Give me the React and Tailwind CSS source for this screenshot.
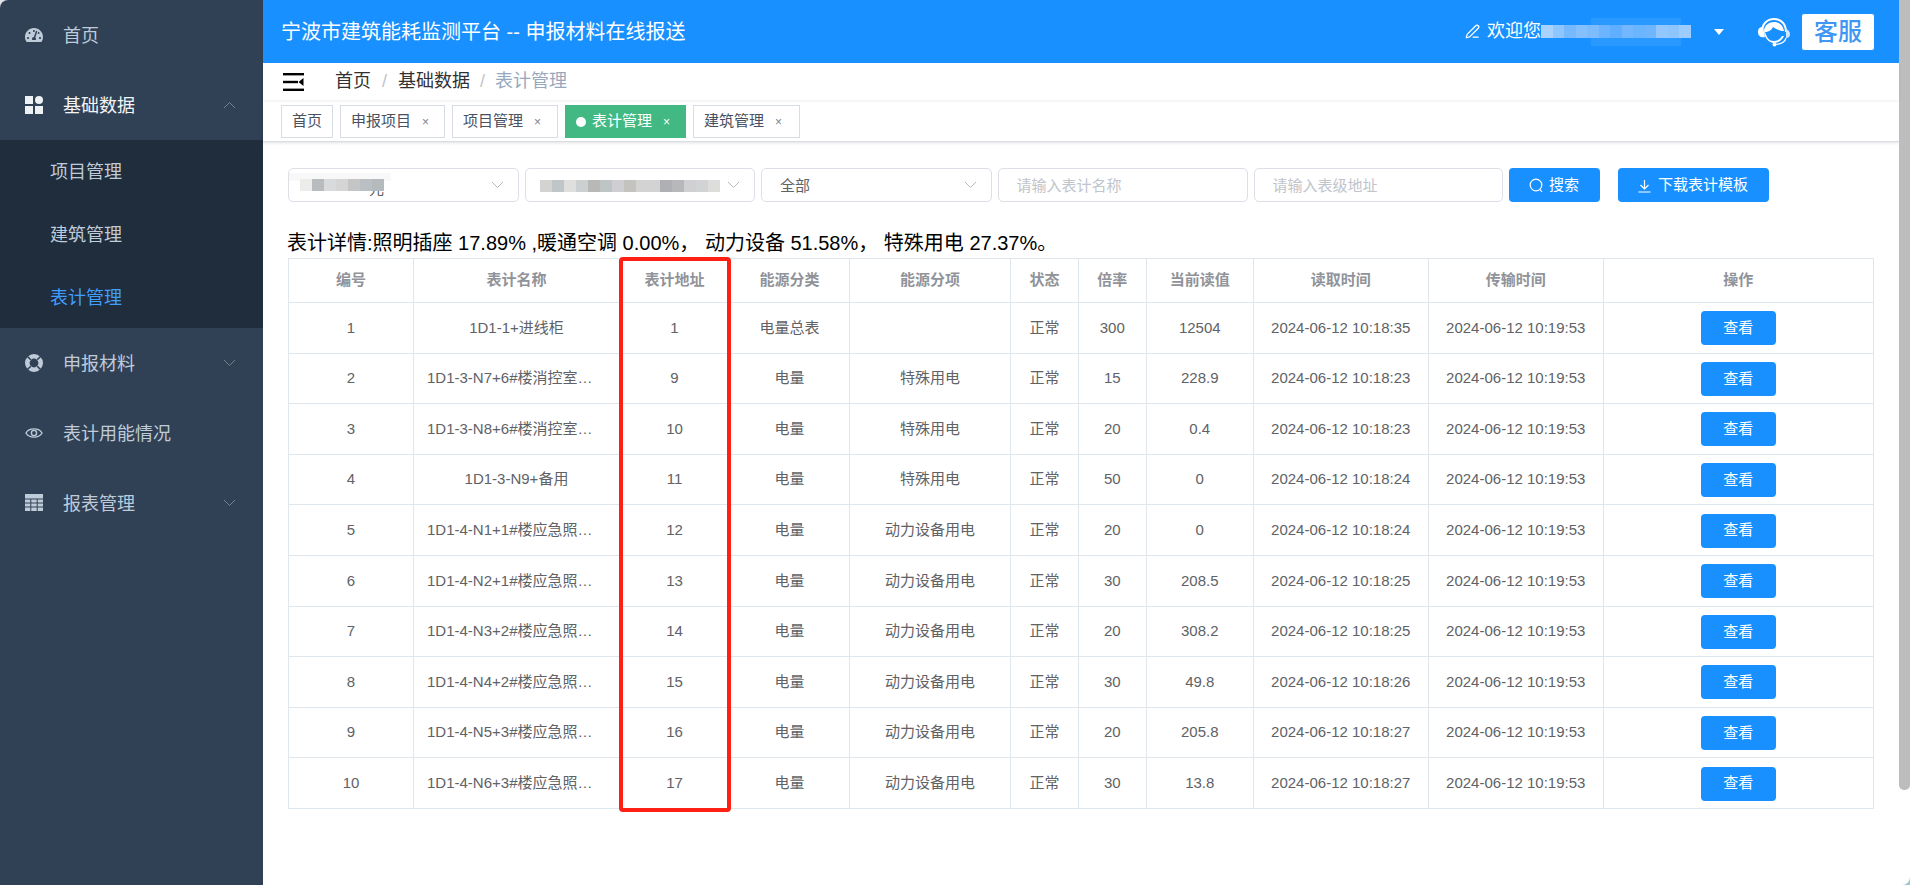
import React from 'react';
import { FaTachometerAlt } from 'react-icons/fa';
import { PenLine } from 'lucide-react';

const font = 'font-["Liberation_Sans","Noto_Sans_CJK_SC",sans-serif]';
const sent = '2024-06-12 10:19:53';

const rows = [
  ['1', '1D1-1+进线柜', '1', '电量总表', '', '正常', '300', '12504', '2024-06-12 10:18:35', sent],
  ['2', '1D1-3-N7+6#楼消控室…', '9', '电量', '特殊用电', '正常', '15', '228.9', '2024-06-12 10:18:23', sent],
  ['3', '1D1-3-N8+6#楼消控室…', '10', '电量', '特殊用电', '正常', '20', '0.4', '2024-06-12 10:18:23', sent],
  ['4', '1D1-3-N9+备用', '11', '电量', '特殊用电', '正常', '50', '0', '2024-06-12 10:18:24', sent],
  ['5', '1D1-4-N1+1#楼应急照…', '12', '电量', '动力设备用电', '正常', '20', '0', '2024-06-12 10:18:24', sent],
  ['6', '1D1-4-N2+1#楼应急照…', '13', '电量', '动力设备用电', '正常', '30', '208.5', '2024-06-12 10:18:25', sent],
  ['7', '1D1-4-N3+2#楼应急照…', '14', '电量', '动力设备用电', '正常', '20', '308.2', '2024-06-12 10:18:25', sent],
  ['8', '1D1-4-N4+2#楼应急照…', '15', '电量', '动力设备用电', '正常', '30', '49.8', '2024-06-12 10:18:26', sent],
  ['9', '1D1-4-N5+3#楼应急照…', '16', '电量', '动力设备用电', '正常', '20', '205.8', '2024-06-12 10:18:27', sent],
  ['10', '1D1-4-N6+3#楼应急照…', '17', '电量', '动力设备用电', '正常', '30', '13.8', '2024-06-12 10:18:27', sent],
];

const heads = ['编号', '表计名称', '表计地址', '能源分类', '能源分项', '状态', '倍率', '当前读值', '读取时间', '传输时间', '操作'];
const colWidths = ['w-[125px]', 'w-[206px]', 'w-[110px]', 'w-[120px]', 'w-[161px]', 'w-[68px]', 'w-[67.5px]', 'w-[107.5px]', 'w-[174.5px]', 'w-[175.5px]', 'w-[269.5px]'];

const tags = [
  { label: '首页', w: 'w-[52px]' },
  { label: '申报项目', w: 'w-[105px]', close: true },
  { label: '项目管理', w: 'w-[106px]', close: true },
  { label: '表计管理', w: 'w-[121px]', close: true, active: true },
  { label: '建筑管理', w: 'w-[107px]', close: true },
];

const mosaic1 = ['bg-[#ececea]', 'bg-[#b9bcbf]', 'bg-[#d8dadb]', 'bg-[#d4d5d4]', 'bg-[#c4c6c6]', 'bg-[#b9bfc3]', 'bg-[#b5babd]'];
const mosaic2 = ['bg-[#d3d3d1]', 'bg-[#c0c5c8]', 'bg-[#dfdfde]', 'bg-[#ccd0d1]', 'bg-[#b8b9b6]', 'bg-[#bfc4c5]', 'bg-[#cfcfd3]', 'bg-[#c4c3bf]', 'bg-[#d3d3d3]', 'bg-[#d3d3d3]', 'bg-[#aeb0b4]', 'bg-[#b6b8ba]', 'bg-[#d0d0d2]', 'bg-[#d2d3d5]', 'bg-[#dddddb]'];
const mosaicTop = ['bg-[#a8d2ff]', 'bg-[#8fc6ff]', 'bg-[#77b9ff]', 'bg-[#84c0ff]', 'bg-[#7dbdff]', 'bg-[#6cb4ff]', 'bg-[#60aeff]', 'bg-[#72b7ff]', 'bg-[#6bb4ff]', 'bg-[#70b6ff]', 'bg-[#93c7ff]', 'bg-[#8ec5ff]', 'bg-[#9dccff]'];

const Chevron = ({ up, className = '' }) => (
  <svg width="13" height="8" viewBox="0 0 13 8" fill="none" className={className}>
    <path d={up ? 'M1 7 L6.5 1.5 L12 7' : 'M1 1 L6.5 6.5 L12 1'} stroke="currentColor" strokeWidth="1" />
  </svg>
);

const AppsIcon = () => (
  <svg width="18" height="18" viewBox="0 0 18 18" fill="currentColor">
    <rect x="0" y="0" width="8" height="8" />
    <circle cx="14" cy="4" r="4" />
    <rect x="0" y="10" width="8" height="8" />
    <rect x="10" y="10" width="8" height="8" />
  </svg>
);

const RingIcon = () => (
  <svg width="18" height="18" viewBox="0 0 18 18" fill="none">
    <circle cx="9" cy="9" r="6.7" stroke="currentColor" strokeWidth="4.6" />
    <path d="M2.2 2.2 L5.8 5.8 M15.8 2.2 L12.2 5.8 M2.2 15.8 L5.8 12.2 M15.8 15.8 L12.2 12.2" stroke="#304156" strokeWidth="1.6" />
  </svg>
);

const EyeIcon = () => (
  <svg width="18" height="14" viewBox="0 0 18 14" fill="none" stroke="currentColor" strokeWidth="1.4">
    <path d="M1 7 C4 1.5 14 1.5 17 7 C14 12.5 4 12.5 1 7 Z" />
    <circle cx="9" cy="7" r="2.6" />
  </svg>
);

const TableIcon = () => (
  <svg width="18" height="17" viewBox="0 0 18 17" fill="currentColor">
    <rect x="0" y="0" width="18" height="4.5" />
    <rect x="0" y="5.5" width="5.3" height="3" />
    <rect x="6.3" y="5.5" width="5.4" height="3" />
    <rect x="12.7" y="5.5" width="5.3" height="3" />
    <rect x="0" y="9.5" width="5.3" height="3" />
    <rect x="6.3" y="9.5" width="5.4" height="3" />
    <rect x="12.7" y="9.5" width="5.3" height="3" />
    <rect x="0" y="13.5" width="5.3" height="3.5" />
    <rect x="6.3" y="13.5" width="5.4" height="3.5" />
    <rect x="12.7" y="13.5" width="5.3" height="3.5" />
  </svg>
);

const MenuItem = ({ icon, label, arrow, open }) => (
  <div className={`h-[70px] flex items-center pl-[25px] pr-[27px] text-[18px] ${open ? 'text-[#f4f4f5]' : 'text-[#bfcbd9]'}`}>
    <span className={`w-[18px] flex justify-center ${open ? 'text-[#eef1f4]' : 'text-[#bfcbd9]'}`}>{icon}</span>
    <span className="ml-[20px] flex-1 pt-[3px]">{label}</span>
    {arrow && <Chevron up={open} className="text-[#76808e]" />}
  </div>
);

const SubItem = ({ label, active }) => (
  <div className={`h-[62.67px] flex items-center pl-[50px] pt-[3px] text-[18px] ${active ? 'text-[#409eff]' : 'text-[#bfcbd9]'}`}>{label}</div>
);

const Sidebar = () => (
  <aside className="w-[263px] shrink-0 bg-[#304156]">
    <MenuItem icon={<FaTachometerAlt size={18} />} label="首页" />
    <MenuItem icon={<AppsIcon />} label="基础数据" arrow open />
    <div className="bg-[#1f2d3d]">
      <SubItem label="项目管理" />
      <SubItem label="建筑管理" />
      <SubItem label="表计管理" active />
    </div>
    <MenuItem icon={<RingIcon />} label="申报材料" arrow />
    <MenuItem icon={<EyeIcon />} label="表计用能情况" />
    <MenuItem icon={<TableIcon />} label="报表管理" arrow />
  </aside>
);

const Headset = () => (
  <svg width="34" height="30" viewBox="0 0 34 30" fill="none">
    <path d="M5 15 C5 7 10 2 17 2 C24 2 29 7 29 15" stroke="#fff" strokeWidth="2" />
    <path d="M1 15 C1 11 3 10 6 10 L8 20 C4 21 1 19 1 15 Z" fill="#fff" />
    <path d="M7 13 C8 8 12 5 17 5 C22 5 26 8 27 14 C23 14 19 12 16 10 C15 13 11 15 8 15 L10 20 C12 23 14 24 17 24 C21 24 23 22 25 19 L27 19 C25 23 22 26 17 26 C12 26 7 21 7 13 Z" fill="#fff" />
    <path d="M29 12 C32 13 33 15 33 17 C33 20 31 21 29 21 Z" fill="#cfe6ff" />
    <path d="M29 21 C28 25 24 27 19 27.5" stroke="#fff" strokeWidth="1.2" />
    <circle cx="17.5" cy="27.5" r="2" fill="#fff" />
  </svg>
);

const TopBar = () => (
  <header className="h-[63px] shrink-0 bg-[#1890ff] flex items-center text-white">
    <h1 className="ml-[18px] text-[20px] font-normal">宁波市建筑能耗监测平台 -- 申报材料在线报送</h1>
    <div className="ml-auto flex items-center">
      <PenLine size={15} strokeWidth={2} />
      <span className="ml-[7px] text-[18px] w-[54px]">欢迎您</span>
      <div className="relative flex w-[150px] h-[13px]">
        <span className="absolute left-[50px] right-[10px] -top-[7px] -bottom-[8px] bg-[#2a99ff]" />
        {mosaicTop.map((c, i) => <span key={i} className={`relative h-full w-[11.54px] ${c}`} />)}
      </div>
      <svg width="10" height="6" viewBox="0 0 10 6" className="ml-[23px]"><polygon points="0,0 10,0 5,6" fill="#fff" /></svg>
      <span className="ml-[33px] flex"><Headset /></span>
      <button className="ml-[11px] mr-[25px] w-[72px] h-[36px] bg-white rounded-[2px] text-[#4096f3] text-[24px] font-medium leading-none">客服</button>
    </div>
  </header>
);

const Breadcrumb = () => (
  <div className="h-[37px] shrink-0 flex items-center text-[18px] bg-white relative shadow-[0_1px_3px_rgba(0,21,41,0.07)]">
    <svg width="21" height="18" viewBox="0 0 21 18" className="ml-[20px] text-black" fill="currentColor">
      <rect x="0" y="0" width="21" height="2.4" />
      <rect x="0" y="7.8" width="15" height="2.4" />
      <polygon points="20.5,5 20.5,13 15.5,9" />
      <rect x="0" y="15.6" width="21" height="2.4" />
    </svg>
    <span className="ml-[31px] text-[#303133]">首页</span>
    <span className="mx-[11px] text-[#c0c4cc]">/</span>
    <span className="text-[#303133]">基础数据</span>
    <span className="mx-[10px] text-[#c0c4cc]">/</span>
    <span className="text-[#97a8be]">表计管理</span>
  </div>
);

const TagsBar = () => (
  <div className="h-[42px] shrink-0 flex items-start gap-[7px] pl-[18px] pt-[5px] bg-white border-b border-[#d8dce5] shadow-[0_1px_3px_rgba(0,0,0,0.12)]">
    {tags.map((t) => (
      <div
        key={t.label}
        className={`h-[33px] ${t.w} flex items-center border text-[15px] pl-[10px] ${t.active ? 'bg-[#42b983] border-[#42b983] text-white' : 'bg-white border-[#d8dce5] text-[#495060]'}`}
      >
        {t.active && <span className="w-[10px] h-[10px] rounded-full bg-white mr-[6px]" />}
        {t.label}
        {t.close && <span className={`ml-[11px] text-[12px] leading-none ${t.active ? 'text-white' : 'text-[#7d8494]'}`}>×</span>}
      </div>
    ))}
  </div>
);

const SelectBox = ({ children, w = 'w-[230.5px]' }) => (
  <div className={`${w} h-[34px] relative flex items-center pl-[18px] pt-[2px] bg-white border border-[#dcdfe6] rounded-[5px] text-[15px] text-[#606266]`}>
    {children}
    <Chevron className="absolute right-[14px] top-[12px] text-[#b4b8c0]" />
  </div>
);

const Filters = () => (
  <div className="mt-[26px] flex gap-[6px] text-[15px]">
    <SelectBox>
      <span className="absolute left-0 top-[4px] w-[102px] h-[8px] bg-[#f8f8f8]" />
      <span className="absolute left-[80px] top-[12px] leading-none">元</span>
      <div className="absolute left-[11px] top-[10px] flex h-[12px]">
        {mosaic1.map((c, i) => <span key={i} className={`w-[12px] h-full ${c}`} />)}
      </div>
    </SelectBox>
    <SelectBox>
      <div className="absolute left-[14px] top-[11px] flex h-[12px]">
        {mosaic2.map((c, i) => <span key={i} className={`w-[12px] h-full ${c}`} />)}
      </div>
    </SelectBox>
    <SelectBox>全部</SelectBox>
    <div className="w-[250px] h-[34px] flex items-center pl-[18px] pt-[2px] border border-[#dcdfe6] rounded-[5px] text-[#c0c4cc]">请输入表计名称</div>
    <div className="w-[249px] h-[34px] flex items-center pl-[18px] pt-[2px] border border-[#dcdfe6] rounded-[5px] text-[#c0c4cc]">请输入表级地址</div>
    <button className="w-[91px] h-[34px] flex items-center justify-center gap-[5px] pt-[1px] bg-[#1890ff] rounded-[4px] text-white">
      <svg width="15" height="16" viewBox="0 0 15 16" fill="none" stroke="#fff" strokeWidth="1.2">
        <circle cx="7" cy="7" r="5.8" />
        <path d="M11 11.5 L13 14" />
      </svg>
      搜索
    </button>
    <button className="ml-[12px] w-[151px] h-[34px] flex items-center justify-center gap-[7px] pt-[1px] bg-[#1890ff] rounded-[4px] text-white">
      <svg width="13" height="14" viewBox="0 0 13 14" fill="none" stroke="#fff" strokeWidth="1.2">
        <path d="M6.5 1 V9.5 M2.5 6 L6.5 10 L10.5 6 M0.5 13 H12.5" />
      </svg>
      下载表计模板
    </button>
  </div>
);

const MeterTable = () => (
  <div className="relative">
    <table className="table-fixed border-collapse w-[1584.5px] text-[15px] text-center">
      <colgroup>
        {colWidths.map((w, i) => <col key={i} className={w} />)}
      </colgroup>
      <thead>
        <tr className="h-[44px]">
          {heads.map((h) => (
            <th key={h} className="border border-[#dfe6ec] font-bold text-[#909399]">{h}</th>
          ))}
        </tr>
      </thead>
      <tbody>
        {rows.map((r) => (
          <tr key={r[0]} className="h-[50.6px]">
            {r.map((v, j) => (
              <td
                key={j}
                className={`border border-[#dfe6ec] text-[#606266] p-0 whitespace-nowrap ${v.endsWith('…') ? 'text-left pl-[13px]' : ''}`}
              >
                {v}
              </td>
            ))}
            <td className="border border-[#dfe6ec] p-0">
              <button className="block mx-auto mt-[1px] w-[75px] h-[34px] bg-[#1890ff] rounded-[4px] text-white">查看</button>
            </td>
          </tr>
        ))}
      </tbody>
    </table>
    {/* 红框标注 */}
    <div className="absolute left-[330.5px] -top-[1px] w-[112.5px] h-[555px] border-[4px] border-[#ff2015] rounded-[4px] pointer-events-none" />
  </div>
);

const App = () => (
  <div className={`w-[1910px] h-[885px] overflow-hidden bg-linear-to-br from-[#e2e5e8] to-[#9cc8d0] ${font}`}>
    <div className="w-full h-full flex overflow-hidden bg-white rounded-tl-[8px] rounded-br-[8px]">
      <Sidebar />
      <main className="w-[1636px] shrink-0 flex flex-col">
        <TopBar />
        <Breadcrumb />
        <TagsBar />
        <div className="pl-[25px] flex-1">
          <Filters />
          <p className="mt-[28px] mb-[2px] -ml-[1px] h-[26px] leading-[26px] text-[20px] text-black whitespace-nowrap">
            表计详情:照明插座 17.89% ,暖通空调 0.00%， 动力设备 51.58%， 特殊用电 27.37%。
          </p>
          <MeterTable />
        </div>
      </main>
      <div className="w-[11px] h-[790px] shrink-0 bg-[#bdbdbd] rounded-b-[5px]" />
    </div>
  </div>
);

export default App;
